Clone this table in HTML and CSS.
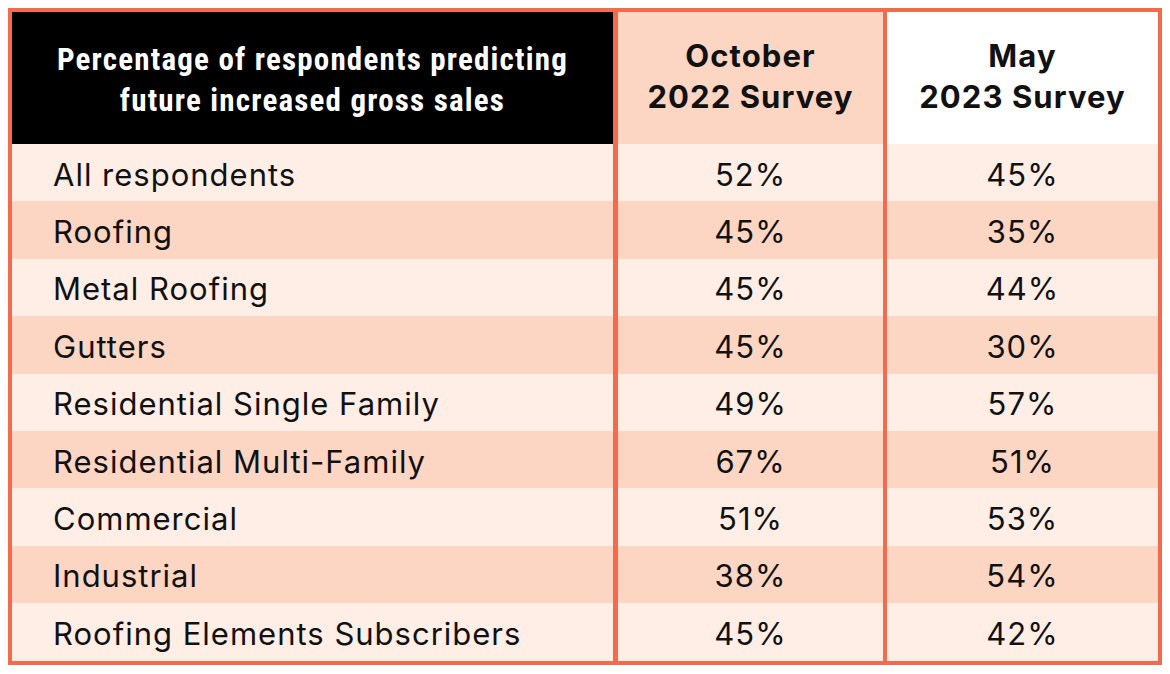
FILE: index.html
```html
<!DOCTYPE html>
<html>
<head>
<meta charset="utf-8">
<link rel="stylesheet" href="styles.css">
</head>
<body>
<div class="table">
  <div class="row head">
    <div class="cell c1 hblack">Percentage of respondents predicting<br>future increased gross sales</div>
    <div class="cell c2 hpeach">October<br>2022 Survey</div>
    <div class="cell c3 hwhite">May<br>2023 Survey</div>
  </div>
  <div class="row light"><div class="cell c1">All respondents</div><div class="cell c2">52%</div><div class="cell c3">45%</div></div>
  <div class="row dark"><div class="cell c1">Roofing</div><div class="cell c2">45%</div><div class="cell c3">35%</div></div>
  <div class="row light"><div class="cell c1">Metal Roofing</div><div class="cell c2">45%</div><div class="cell c3">44%</div></div>
  <div class="row dark"><div class="cell c1">Gutters</div><div class="cell c2">45%</div><div class="cell c3">30%</div></div>
  <div class="row light"><div class="cell c1">Residential Single Family</div><div class="cell c2">49%</div><div class="cell c3">57%</div></div>
  <div class="row dark"><div class="cell c1">Residential Multi-Family</div><div class="cell c2">67%</div><div class="cell c3">51%</div></div>
  <div class="row light"><div class="cell c1">Commercial</div><div class="cell c2">51%</div><div class="cell c3">53%</div></div>
  <div class="row dark"><div class="cell c1">Industrial</div><div class="cell c2">38%</div><div class="cell c3">54%</div></div>
  <div class="row light"><div class="cell c1">Roofing Elements Subscribers</div><div class="cell c2">45%</div><div class="cell c3">42%</div></div>
</div>
</body>
</html>
```
FILE: styles.css
```css
html, body {
  margin: 0;
  padding: 0;
  background: #ffffff;
}
body {
  padding: 8px 0 0 8px;
  font-family: Inter, Roboto, "Liberation Sans", sans-serif;
  color: #111111;
}
.table {
  width: 1146px;
  border: 4px solid #F46A4C;
  display: flex;
  flex-direction: column;
}
.row {
  display: grid;
  grid-template-columns: 601px 270px 1fr;
  height: 57.4px;
}
.row.head {
  height: 132px;
}
.light { background: #FEEEE6; }
.dark { background: #FCD5C3; }
.cell {
  display: flex;
  align-items: center;
  font-size: 31px;
  letter-spacing: 1px;
  padding-top: 3px;
  box-sizing: border-box;
}
.c1 {
  padding-left: 41px;
}
.c2 {
  justify-content: center;
  border-left: 5px solid #F46A4C;
}
.c3 {
  justify-content: center;
  border-left: 4px solid #F46A4C;
}
.head .cell {
  justify-content: center;
  text-align: center;
  font-weight: 700;
  line-height: 41px;
}
.hblack {
  background: #000000;
  color: #ffffff;
  padding-left: 0;
  font-family: "Liberation Sans Narrow", "Roboto Condensed", "DejaVu Sans Condensed", sans-serif;
  font-size: 31px;
  letter-spacing: 1.2px;
  padding-top: 4px;
}
.hpeach {
  background: #FCD5C3;
  font-size: 31px;
  letter-spacing: 1.1px;
  padding-top: 0;
  padding-bottom: 4px;
}
.hwhite {
  background: #ffffff;
  font-size: 31px;
  letter-spacing: 1.1px;
  padding-top: 0;
  padding-bottom: 4px;
}
```
